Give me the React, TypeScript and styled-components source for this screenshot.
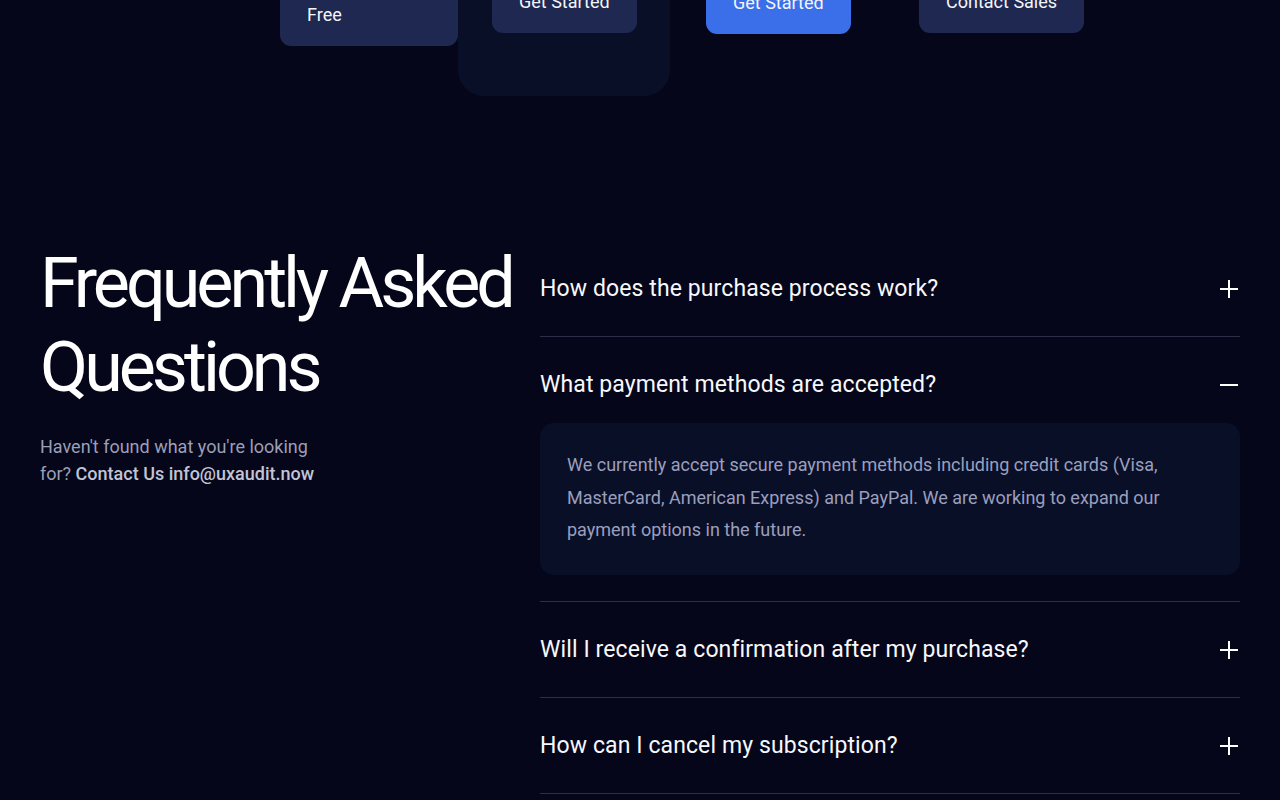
import React, { useState } from 'react';
import styled, { createGlobalStyle } from 'styled-components';

const GlobalStyle = createGlobalStyle`
    html, body {
        margin: 0;
        padding: 0;
        background: #05061a;
        overflow: hidden;
    }
    body {
        font-family: Roboto, "Noto Sans", Arial, sans-serif;
        color: #f4f5fa;
    }
    * {
        box-sizing: border-box;
    }
`;

const Page = styled.div`
    width: 1280px;
    min-height: 800px;
    background: #05061a;
`;

const PlanRow = styled.div`
    display: flex;
    align-items: flex-start;
    margin-top: -200px;
    padding-left: 246px;
`;

const PlanCell = styled.div<{ height: number; padLeft: number; padBottom?: number; featured?: boolean }>`
    width: 212px;
    height: ${props => props.height}px;
    padding: 0 0 ${props => props.padBottom || 0}px ${props => props.padLeft}px;
    display: flex;
    flex-direction: column;
    justify-content: flex-end;
    align-items: flex-start;
    background: ${props => props.featured ? '#0a0f28' : 'transparent'};
    border-radius: 0 0 26px 26px;
`;

const PlanButton = styled.button<{ primary?: boolean }>`
    max-width: 100%;
    padding: 18px 27px;
    border: none;
    border-radius: 11px;
    background: ${props => props.primary ? '#3b6ee9' : '#1f2851'};
    color: #f4f5fa;
    font-family: inherit;
    font-size: 18px;
    line-height: 26px;
    text-align: left;
    cursor: pointer;
`;

const FaqSection = styled.section`
    display: grid;
    grid-template-columns: 500px 700px;
    padding: 0 40px;
    margin-top: 145px;
    align-items: start;
`;

const IntroColumn = styled.div`
    display: flex;
    flex-direction: column;
    gap: 24px;
`;

const Heading = styled.h2`
    margin: 0;
    font-size: 70px;
    line-height: 84px;
    font-weight: 400;
    letter-spacing: -4px;
    color: #ffffff;
    white-space: nowrap;
`;

const IntroText = styled.p`
    margin: 0;
    max-width: 290px;
    font-size: 18px;
    line-height: 27px;
    color: #9c9fb6;
`;

const ContactLink = styled.a`
    color: #c2c4d6;
    font-weight: 500;
    text-decoration: none;
`;

const FaqList = styled.div`
    display: flex;
    flex-direction: column;
`;

const FaqItem = styled.div`
    border-bottom: 1px solid #2c2f47;
`;

const QuestionButton = styled.button<{ open?: boolean }>`
    width: 100%;
    display: flex;
    align-items: center;
    justify-content: space-between;
    padding: 32px 0 ${props => props.open ? '22px' : '31px'};
    background: none;
    border: none;
    color: #f7f8fc;
    font-family: inherit;
    font-size: 23px;
    line-height: 32px;
    font-weight: 400;
    letter-spacing: 0.1px;
    text-align: left;
    cursor: pointer;
`;

const ToggleIcon = styled.svg`
    width: 20px;
    height: 20px;
    flex-shrink: 0;
    margin-right: 1px;
`;

const AnswerWrap = styled.div`
    padding-bottom: 26px;
`;

const AnswerBox = styled.div`
    background: #0a0f28;
    border-radius: 14px;
    padding: 26px 27px 28px;
    font-size: 18px;
    line-height: 32.5px;
    color: #9a9fbd;
`;

interface Faq {
    question: string;
    answer: string;
}

const faqs: Faq[] = [
    {
        question: 'How does the purchase process work?',
        answer: 'Choose a plan, complete the secure checkout and you will get access to your audit dashboard right away.',
    },
    {
        question: 'What payment methods are accepted?',
        answer: 'We currently accept secure payment methods including credit cards (Visa, MasterCard, American Express) and PayPal. We are working to expand our payment options in the future.',
    },
    {
        question: 'Will I receive a confirmation after my purchase?',
        answer: 'Yes, a confirmation email with your receipt and next steps is sent as soon as the payment goes through.',
    },
    {
        question: 'How can I cancel my subscription?',
        answer: 'You can cancel at any time from your account settings. Your plan stays active until the end of the billing period.',
    },
];

const Toggle: React.FC<{ open: boolean }> = ({ open }) => (
    <ToggleIcon viewBox="0 0 20 20" fill="none" stroke="#ffffff" strokeWidth={2}>
        <path d="M1 10h18" />
        {!open && <path d="M10 1v18" />}
    </ToggleIcon>
);

const App: React.FC = () => {
    const [openIndex, setOpenIndex] = useState<number | null>(1);

    return (
        <Page>
            <GlobalStyle />
            <PlanRow>
                <PlanCell height={246} padLeft={34}>
                    <PlanButton>Get Started Free</PlanButton>
                </PlanCell>
                <PlanCell height={296} padLeft={34} padBottom={63} featured>
                    <PlanButton>Get Started</PlanButton>
                </PlanCell>
                <PlanCell height={234} padLeft={36}>
                    <PlanButton primary>Get Started</PlanButton>
                </PlanCell>
                <PlanCell height={233} padLeft={37}>
                    <PlanButton>Contact Sales</PlanButton>
                </PlanCell>
            </PlanRow>

            <FaqSection>
                <IntroColumn>
                    <Heading>
                        Frequently Asked
                        <br />
                        Questions
                    </Heading>
                    <IntroText>
                        Haven't found what you're looking for?{' '}
                        <ContactLink href="mailto:info@uxaudit.now">Contact Us info@uxaudit.now</ContactLink>
                    </IntroText>
                </IntroColumn>

                <FaqList>
                    {faqs.map((faq, i) => {
                        const open = openIndex === i;
                        return (
                            <FaqItem key={faq.question}>
                                <QuestionButton open={open} onClick={() => setOpenIndex(open ? null : i)}>
                                    {faq.question}
                                    <Toggle open={open} />
                                </QuestionButton>
                                {open && (
                                    <AnswerWrap>
                                        <AnswerBox>{faq.answer}</AnswerBox>
                                    </AnswerWrap>
                                )}
                            </FaqItem>
                        );
                    })}
                </FaqList>
            </FaqSection>
        </Page>
    );
};

export default App;
